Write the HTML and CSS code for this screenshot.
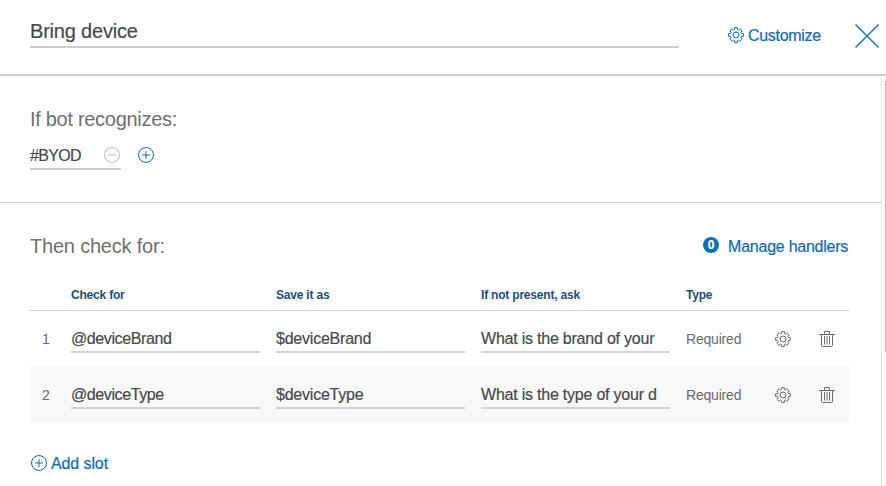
FILE: index.html
```
<!DOCTYPE html>
<html lang="en">
<head>
<meta charset="utf-8">
<title>Bring device</title>
<link rel="stylesheet" href="styles.css">
</head>
<body>
<svg class="defs" aria-hidden="true">
  <symbol id="gear" viewBox="0 0 16 16"><path d="M6.6 2.5V.6h2.8v1.9l1.1.5 1.400-1.300 2.300 2.200-1.300 1.400.6 1.300h1.900v2.800h-1.900l-.6 1.300 1.300 1.400-2.300 2.200-1.400-1.300-1.100.5v1.900H6.600v-1.900L5.500 13l-1.400 1.300-2.300-2.200 1.300-1.400-.6-1.300H.6V6.600h1.900l.6-1.300-1.300-1.400 2.300-2.200L5.500 3z"/><circle cx="8" cy="8" r="3"/></symbol>
  <symbol id="trash" viewBox="0 0 16 16"><path d="M0 3.500h16M5.500 3.500v-3h5v3M2.500 3.500v11q0 1 1 1h9q1 0 1-1v-11M5.500 5v8.500M8 5v8.500M10.500 5v8.500"/></symbol>
  <symbol id="plus" viewBox="0 0 16 16"><circle cx="8" cy="8" r="7.450"/><path d="M8 4v8M4 8h8"/></symbol>
  <symbol id="minus" viewBox="0 0 16 16"><circle cx="8" cy="8" r="7.450"/><path d="M4 8h8"/></symbol>
</svg>
<header class="header">
  <div class="title"><span>Bring device</span></div>
  <a class="customize"><svg class="icon"><use href="#gear"/></svg><span>Customize</span></a>
  <svg class="close" viewBox="0 0 24 24"><path d="M.5.5l23 23M23.500.5l-23 23"/></svg>
</header>
<div class="body">
  <main class="content">
    <section class="recognizes">
      <h2>If bot recognizes:</h2>
      <div class="conditions">
        <div class="condition"><span>#BYOD</span><svg class="icon minus"><use href="#minus"/></svg></div>
        <svg class="icon blue"><use href="#plus"/></svg>
      </div>
    </section>
    <section class="slots">
      <div class="slots-head">
        <h2 class="check">Then check for:</h2>
        <a class="handlers"><span class="count">0</span><span class="label">Manage handlers</span></a>
      </div>
      <div class="row head"><span></span><span>Check for</span><span>Save it as</span><span>If not present, ask</span><span>Type</span></div>
      <div class="row">
        <span class="num">1</span>
        <div class="field name">@deviceBrand</div><div class="field">$deviceBrand</div><div class="field">What is the brand of your</div>
        <span class="type">Required</span><svg class="icon gray"><use href="#gear"/></svg><svg class="icon gray delete"><use href="#trash"/></svg>
      </div>
      <div class="row alt">
        <span class="num">2</span>
        <div class="field name">@deviceType</div><div class="field">$deviceType</div><div class="field">What is the type of your d</div>
        <span class="type">Required</span><svg class="icon gray"><use href="#gear"/></svg><svg class="icon gray delete"><use href="#trash"/></svg>
      </div>
      <a class="add"><svg class="icon"><use href="#plus"/></svg><span>Add slot</span></a>
    </section>
  </main>
  <div class="scrollbar"><div class="thumb"></div></div>
</div>
</body>
</html>
```
FILE: styles.css
```
* { box-sizing: border-box; }
body { margin: 0; width: 886px; height: 486px; overflow: hidden; background: #fff; color: #464a4a; font: 16px/20px "Liberation Sans", Arial, sans-serif; white-space: nowrap; }
.defs { display: none; }
.icon { width: 16px; height: 16px; display: block; flex: none; fill: none; stroke: currentColor; stroke-width: 1; }
a, .blue { color: #1069b2; }
a span, .title, .condition, .field { -webkit-text-stroke: .2px currentColor; }

.header { display: flex; height: 76px; padding-left: 30px; border-bottom: 2px solid #cfcfcf; }
.title { width: 649px; height: 48px; padding-top: 19px; border-bottom: 2px solid #cfcfcf; font-size: 20px; line-height: 24px; letter-spacing: -.2px; }
.customize { display: flex; margin: 26px 0 0 49px; width: 127px; gap: 4px; letter-spacing: -.3px; }
.customize .icon { margin-top: 1px; }
.close { width: 24px; height: 24px; margin-top: 24px; fill: none; stroke: #1478bd; stroke-width: 1.500; }

.body { display: flex; height: 410px; }
.content { width: 881px; }
h2 { margin: 0; font-size: 20px; line-height: 24px; font-weight: 400; color: #6f6f6f; letter-spacing: -.3px; }
.check { letter-spacing: -.2px; }
.recognizes { height: 127px; padding: 31px 0 0 30px; border-bottom: 1px solid #cfcfcf; }
.conditions { display: flex; gap: 17px; margin-top: 11px; }
.conditions > .icon { margin-top: 5px; }
.condition { display: flex; justify-content: space-between; width: 91px; height: 28px; padding: 4px 1px 0 0; border-bottom: 2px solid #cfcfcf; letter-spacing: -.7px; }
.condition .icon { margin-top: 1px; }
.minus { color: #b8bcbc; }

.slots { width: 849px; padding: 31px 0 0 30px; }
.slots-head { display: flex; justify-content: space-between; height: 45px; }
.handlers { display: flex; gap: 9px; padding: 3px 1px 0 0; letter-spacing: -.25px; }
.count { width: 16px; height: 16px; border-radius: 8px; background: #0a70b8; color: #fff; font-size: 12px; font-weight: 700; line-height: 16px; text-align: center; letter-spacing: 0; }
.row { display: grid; grid-template-columns: 25px 189px 189px 189px 73px 16px 28px; column-gap: 16px; height: 55px; }
.row.head { height: 32px; line-height: 32px; border-bottom: 1px solid #cfcfcf; color: #1d4e7b; font-size: 12px; font-weight: 700; letter-spacing: -.2px; }
.num { padding: 18px 0 0 12px; font-size: 14px; color: #6a6a6a; }
.field { height: 42px; padding-top: 18px; border-bottom: 2px solid #c8d6d4; overflow: hidden; letter-spacing: -.22px; }
.field.name { letter-spacing: -.4px; }
.type { padding-top: 18px; font-size: 14px; color: #6a6a6a; letter-spacing: -.2px; }
.gray { color: #6a6a6a; margin-top: 20px; }
.delete { justify-self: end; }
.row.alt { height: 56px; padding-top: 1px; background: #f8f8f8; }
.add { display: flex; gap: 4px; margin-top: 32px; padding-left: 1px; letter-spacing: -.1px; }
.add .icon { margin-top: 1px; }
.scrollbar { width: 5px; border-left: 1px solid #e4e4e4; background: #fafafa; }
.thumb { width: 1px; height: 271px; margin: 5px 0 0 3px; background: #b5b5b5; }
```
